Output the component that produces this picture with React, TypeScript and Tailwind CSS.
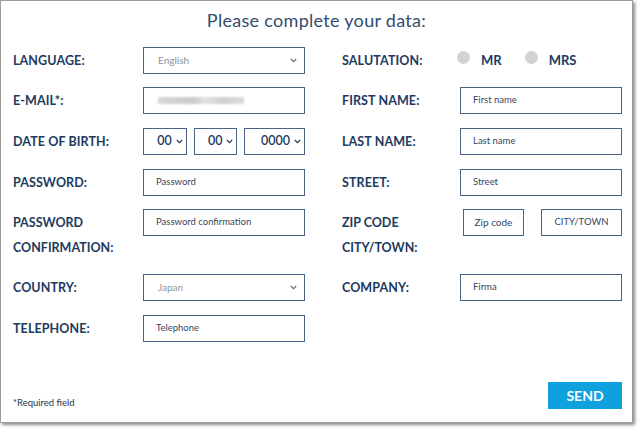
import React from "react";

const labelCls =
  "text-[12.5px] font-bold text-[#1d3a60] uppercase tracking-[0.1px] leading-[27px]";
const inputCls =
  "h-[27px] border border-[#4b6486] bg-white flex items-center pl-[12px] text-[9.5px]";

function Chevron({ className = "" }: { className?: string }) {
  return (
    <svg width="7" height="5" viewBox="0 0 7 5" className={className}>
      <path d="M0.8 1 L3.5 3.7 L6.2 1" fill="none" stroke="currentColor" strokeWidth="1.1" />
    </svg>
  );
}

function Field({ text, muted, select }: { text: string; muted?: boolean; select?: boolean }) {
  return (
    <div className={`${inputCls} w-[162px] pr-[7px] justify-between ${muted ? "text-[#8e939b]" : "text-[#34465e]"}`}>
      <span className={muted ? "pl-[2px] text-[10px]" : ""}>{text}</span>
      {select && <Chevron className="text-[#666]" />}
    </div>
  );
}

function DateBox({ text, w }: { text: string; w: string }) {
  return (
    <div className={`h-[27px] ${w} border border-[#4b6486] flex items-center justify-end pr-[3px] gap-[4px] text-[12.5px] font-semibold text-[#1d3a60]`}>
      <span>{text}</span>
      <Chevron className="text-[#1d3a60]" />
    </div>
  );
}

export default function App() {
  return (
    <div className="w-[640px] h-[430px] bg-white" style={{ fontFamily: "Lato, 'Open Sans', sans-serif" }}>
      <div className="w-[633px] h-[423px] border border-[#9c9c9c] shadow-[2px_2px_3px_rgba(0,0,0,0.45)] bg-white relative flex flex-col">
        <div className="h-[46px] pt-[7px] text-center text-[18px] leading-[24px] text-[#334d6e] font-normal tracking-[0.3px]">
          Please complete your data:
        </div>
        <div className="pl-[12px] flex flex-col">
          {/* Row 1 */}
          <div className="h-[40px] flex items-start">
            <div className={`${labelCls} w-[130px]`}>Language:</div>
            <Field text="English" muted select />
            <div className="w-[37px]" />
            <div className={`${labelCls} w-[118px]`}>Salutation:</div>
            <div className="flex items-center h-[27px] text-[13px] font-bold text-[#1d3a60]">
              <span className="w-[13px] h-[13px] rounded-full bg-[#d3d3d3] ml-[-3px] mt-[-6px]" />
              <span className="ml-[11px]">MR</span>
              <span className="w-[13px] h-[13px] rounded-full bg-[#d3d3d3] ml-[23px] mt-[-6px]" />
              <span className="ml-[11px]">MRS</span>
            </div>
          </div>
          {/* Row 2 */}
          <div className="h-[41px] flex items-start">
            <div className={`${labelCls} w-[130px]`}>E-Mail*:</div>
            <div className={`${inputCls} w-[162px]`}>
              <span className="ml-[2px] w-[86px] h-[7px] bg-[linear-gradient(90deg,#d8d8d8,#c9c9c9_40%,#e3e3e3_55%,#cfcfcf_75%,#dcdcdc)] blur-[1px]" />
            </div>
            <div className="w-[37px]" />
            <div className={`${labelCls} w-[118px]`}>First name:</div>
            <Field text="First name" />
          </div>
          {/* Row 3 */}
          <div className="h-[41px] flex items-start">
            <div className={`${labelCls} w-[130px]`}>Date of birth:</div>
            <div className="w-[162px] flex gap-[7px]">
              <DateBox text="00" w="w-[44px]" />
              <DateBox text="00" w="w-[44px]" />
              <DateBox text="0000" w="w-[61px]" />
            </div>
            <div className="w-[37px]" />
            <div className={`${labelCls} w-[118px]`}>Last name:</div>
            <Field text="Last name" />
          </div>
          {/* Row 4 */}
          <div className="h-[40px] flex items-start">
            <div className={`${labelCls} w-[130px]`}>Password:</div>
            <Field text="Password" />
            <div className="w-[37px]" />
            <div className={`${labelCls} w-[118px]`}>Street:</div>
            <Field text="Street" />
          </div>
          {/* Row 5 */}
          <div className="h-[65px] flex items-start">
            <div className="text-[12.5px] font-bold text-[#1d3a60] uppercase leading-[25px] w-[130px] pt-[1px]">
              Password
              <br />
              Confirmation:
            </div>
            <Field text="Password confirmation" />
            <div className="w-[37px]" />
            <div className="text-[12.5px] font-bold text-[#1d3a60] uppercase leading-[25px] w-[118px] pt-[1px]">
              Zip code
              <br />
              City/town:
            </div>
            <div className="flex ml-[3px] gap-[17px]">
              <div className="h-[27px] w-[61px] border border-[#4b6486] flex items-center justify-center text-[10px] text-[#34465e]">Zip code</div>
              <div className="h-[27px] w-[81px] border border-[#4b6486] flex items-center justify-center text-[9.5px] text-[#34465e]">CITY/TOWN</div>
            </div>
          </div>
          {/* Row 6 */}
          <div className="h-[41px] flex items-start">
            <div className={`${labelCls} w-[130px]`}>Country:</div>
            <Field text="Japan" muted select />
            <div className="w-[37px]" />
            <div className={`${labelCls} w-[118px]`}>Company:</div>
            <Field text="Firma" />
          </div>
          {/* Row 7 */}
          <div className="h-[41px] flex items-start">
            <div className={`${labelCls} w-[130px]`}>Telephone:</div>
            <Field text="Telephone" />
          </div>
        </div>
        <div className="flex items-end justify-between pl-[12px] pr-[10px] mt-[26px]">
          <div className="text-[9.5px] leading-[12px] text-[#2a3442] mb-[0px]">*Required field</div>
          <button className="w-[74px] h-[27px] bg-[#0fa0de] text-white text-[14px] font-bold">SEND</button>
        </div>
      </div>
    </div>
  );
}
